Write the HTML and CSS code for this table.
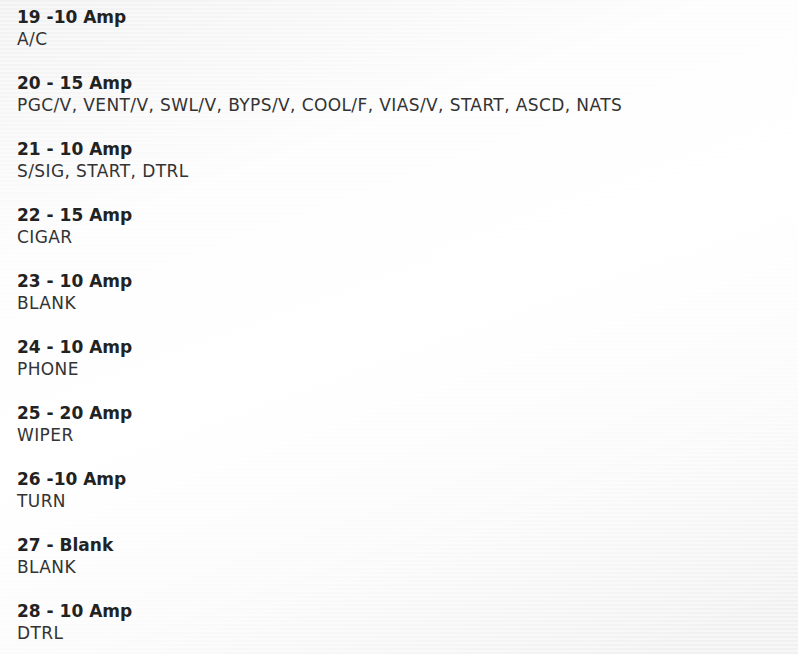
FILE: index.html
```html
<!DOCTYPE html>
<html>
<head>
<meta charset="utf-8">
<link rel="stylesheet" href="styles.css">
</head>
<body>
<div class="list">
  <div class="fuse"><div class="title">19 -10 Amp</div><div class="desc">A/C</div></div>
  <div class="fuse"><div class="title">20 - 15 Amp</div><div class="desc">PGC/V, VENT/V, SWL/V, BYPS/V, COOL/F, VIAS/V, START, ASCD, NATS</div></div>
  <div class="fuse"><div class="title">21 - 10 Amp</div><div class="desc">S/SIG, START, DTRL</div></div>
  <div class="fuse"><div class="title">22 - 15 Amp</div><div class="desc">CIGAR</div></div>
  <div class="fuse"><div class="title">23 - 10 Amp</div><div class="desc">BLANK</div></div>
  <div class="fuse"><div class="title">24 - 10 Amp</div><div class="desc">PHONE</div></div>
  <div class="fuse"><div class="title">25 - 20 Amp</div><div class="desc">WIPER</div></div>
  <div class="fuse"><div class="title">26 -10 Amp</div><div class="desc">TURN</div></div>
  <div class="fuse"><div class="title">27 - Blank</div><div class="desc">BLANK</div></div>
  <div class="fuse"><div class="title">28 - 10 Amp</div><div class="desc">DTRL</div></div>
</div>
</body>
</html>
```
FILE: styles.css
```css
html, body {
  margin: 0;
  height: 100%;
}
body {
  font-family: "DejaVu Sans", "Liberation Sans", sans-serif;
  color: #222;
  background:
    linear-gradient(160deg, rgba(255,255,255,0) 0%, rgba(255,255,255,0.85) 28%, #fff 50%, rgba(255,255,255,0.7) 72%, rgba(255,255,255,0) 95%),
    repeating-linear-gradient(0deg, #f1f1f1 0 2px, #f7f7f7 2px 4px),
    #f5f5f5;
  overflow: hidden;
}
.list {
  display: flex;
  flex-direction: column;
  gap: 22px;
  padding: 6px 17px 0;
}
.title {
  font-weight: 700;
  font-size: 17px;
  line-height: 22px;
  color: #222;
}
.desc {
  font-size: 17px;
  line-height: 22px;
  letter-spacing: 0.4px;
  color: #333;
  font-weight: 400;
}
```
